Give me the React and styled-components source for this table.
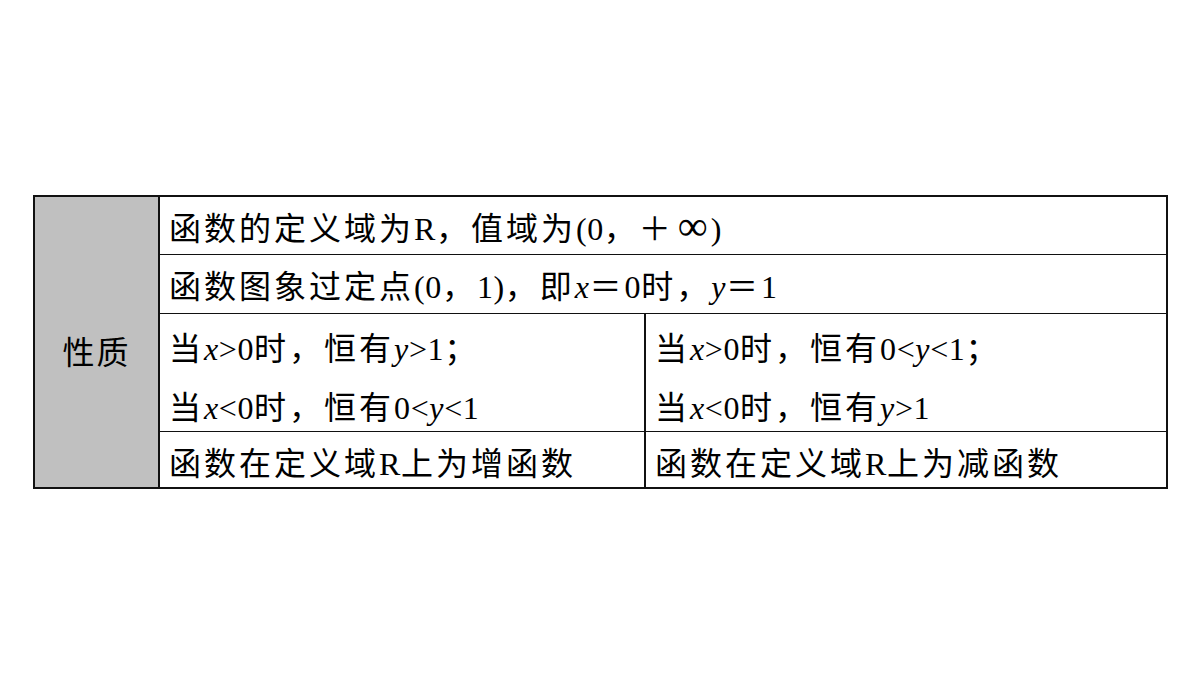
import React from "react";
import styled, {createGlobalStyle} from "styled-components";

const GlobalStyle = createGlobalStyle`
  html, body {
    margin: 0;
    padding: 0;
    background: #fff;
  }
  body {
    font-family: "Liberation Serif", "Noto Sans CJK SC", serif;
    color: #000;
  }
`;

const Page = styled.div`
  width: 1200px;
  height: 675px;
  padding: 195px 0 0 33px;
  box-sizing: border-box;
`;

const Table = styled.div`
  display: grid;
  grid-template-columns: 123px 484px 520px;
  grid-template-rows: 57px 58px 117px 55px;
  column-gap: 2px;
  row-gap: 1px;
  padding: 2px;
  width: 1135px;
  box-sizing: border-box;
  background: #111;
`;

const HeadCell = styled.div`
  grid-row: 1 / span 4;
  background: #c0c0c0;
  display: flex;
  align-items: center;
  justify-content: center;
  padding-top: 16px;
  font-size: 32px;
  letter-spacing: 2px;
`;

const Cell = styled.div`
  grid-column: ${({$span}) => ($span ? `span ${$span}` : "auto")};
  background: #fff;
  padding: 6px 0 0 9px;
  font-size: 32px;
  line-height: ${({$lines}) => ($lines > 1 ? "58.5px" : "52px")};
  letter-spacing: 3px;
  white-space: nowrap;
  overflow: hidden;
`;

const Line = styled.div``;

// latin runs are set tight, like Times in the source
const L = styled.span`
  letter-spacing: 0.6px;
`;

const Inf = styled.span`
  display: inline-block;
  font-size: 42px;
  line-height: 0;
  margin: 0 3px 0 4px;
  letter-spacing: 0;
`;

const Var = styled.i`
  font-style: italic;
  letter-spacing: 0.6px;
`;

export default function App() {
  return (
    <Page>
      <GlobalStyle />
      <Table>
        <HeadCell>性质</HeadCell>
        <Cell $span={2}>
          函数的定义域为<L>R</L>，值域为<L>(0</L>，＋<Inf>∞</Inf><L>)</L>
        </Cell>
        <Cell $span={2}>
          函数图象过定点<L>(0</L>，<L>1)</L>，即<Var>x</Var>＝<L>0</L>时，
          <Var>y</Var>＝<L>1</L>
        </Cell>
        <Cell $lines={2}>
          <Line>
            当<Var>x</Var><L>&gt;0</L>时，恒有<Var>y</Var><L>&gt;1</L>；
          </Line>
          <Line>
            当<Var>x</Var><L>&lt;0</L>时，恒有<L>0&lt;</L><Var>y</Var>
            <L>&lt;1</L>
          </Line>
        </Cell>
        <Cell $lines={2}>
          <Line>
            当<Var>x</Var><L>&gt;0</L>时，恒有<L>0&lt;</L><Var>y</Var>
            <L>&lt;1</L>；
          </Line>
          <Line>
            当<Var>x</Var><L>&lt;0</L>时，恒有<Var>y</Var><L>&gt;1</L>
          </Line>
        </Cell>
        <Cell>
          函数在定义域<L>R</L>上为增函数
        </Cell>
        <Cell>
          函数在定义域<L>R</L>上为减函数
        </Cell>
      </Table>
    </Page>
  );
}
